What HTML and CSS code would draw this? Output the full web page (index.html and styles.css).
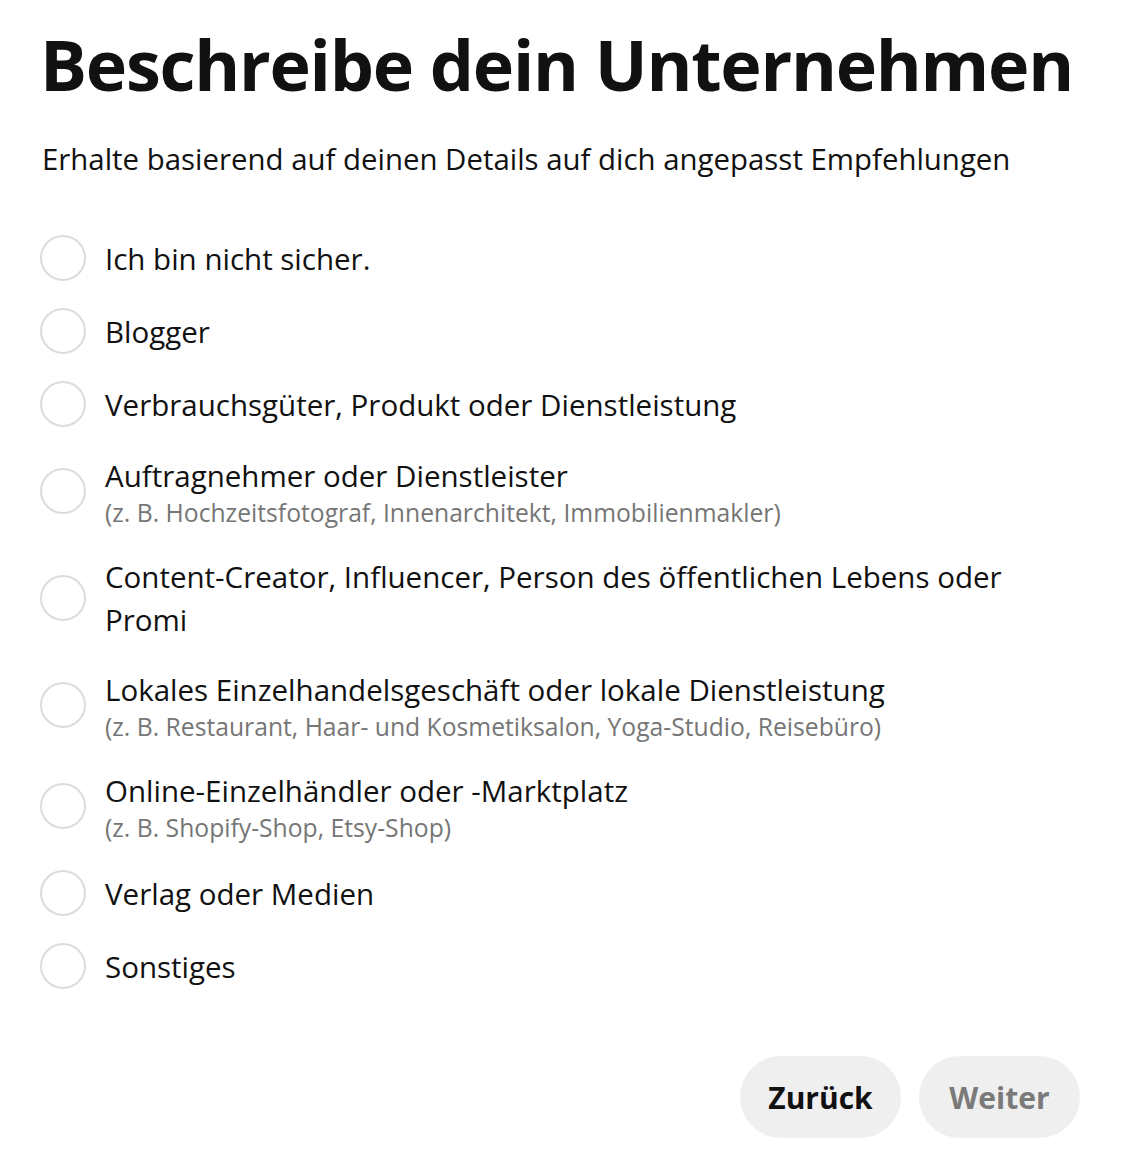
FILE: index.html
```html
<!DOCTYPE html>
<html lang="de">
<head>
<meta charset="utf-8">
<title>Beschreibe dein Unternehmen</title>
<link rel="stylesheet" href="styles.css">
</head>
<body>
<main class="dialog">
  <h1 class="title">Beschreibe dein Unternehmen</h1>
  <p class="subtitle">Erhalte basierend auf deinen Details auf dich angepasst Empfehlungen</p>
  <ul class="options">
    <li class="option"><span class="radio"></span><div class="label"><div class="main">Ich bin nicht sicher.</div></div></li>
    <li class="option"><span class="radio"></span><div class="label"><div class="main">Blogger</div></div></li>
    <li class="option"><span class="radio"></span><div class="label"><div class="main">Verbrauchsgüter, Produkt oder Dienstleistung</div></div></li>
    <li class="option"><span class="radio"></span><div class="label"><div class="main">Auftragnehmer oder Dienstleister</div><div class="sub">(z. B. Hochzeitsfotograf, Innenarchitekt, Immobilienmakler)</div></div></li>
    <li class="option"><span class="radio"></span><div class="label"><div class="main">Content-Creator, Influencer, Person des öffentlichen Lebens oder Promi</div></div></li>
    <li class="option"><span class="radio"></span><div class="label"><div class="main">Lokales Einzelhandelsgeschäft oder lokale Dienstleistung</div><div class="sub">(z. B. Restaurant, Haar- und Kosmetiksalon, Yoga-Studio, Reisebüro)</div></div></li>
    <li class="option"><span class="radio"></span><div class="label"><div class="main">Online-Einzelhändler oder -Marktplatz</div><div class="sub">(z. B. Shopify-Shop, Etsy-Shop)</div></div></li>
    <li class="option"><span class="radio"></span><div class="label"><div class="main">Verlag oder Medien</div></div></li>
    <li class="option"><span class="radio"></span><div class="label"><div class="main">Sonstiges</div></div></li>
  </ul>
  <div class="actions">
    <button class="btn btn-back" type="button">Zurück</button>
    <button class="btn btn-next" type="button" disabled>Weiter</button>
  </div>
</main>
</body>
</html>
```

FILE: styles.css
```css
* { box-sizing: border-box; }
html, body { margin: 0; padding: 0; background: #ffffff; }
body {
  font-family: "Open Sans", "Noto Sans", "Liberation Sans", sans-serif;
  color: #111111;
}
.dialog {
  width: 1132px;
  padding: 22px 52px 0 40px;
}
.title {
  margin: 0;
  font-size: 70px;
  font-weight: 700;
  line-height: 84px;
  letter-spacing: -1.25px;
  white-space: nowrap;
  color: #111111;
}
.subtitle {
  margin: 33px 0 0 2px;
  font-size: 29.4px;
  line-height: 40px;
  color: #111111;
}
.options {
  list-style: none;
  margin: 56px 0 0 0;
  padding: 0;
  display: flex;
  flex-direction: column;
  gap: 27px;
}
.option {
  display: flex;
  align-items: center;
  gap: 19px;
}
.radio {
  flex: none;
  width: 46px;
  height: 46px;
  border: 2px solid #dcdcdc;
  border-radius: 50%;
  background: #fff;
}
.label { flex: 1; min-width: 0; }
.main {
  font-size: 29.5px;
  line-height: 43px;
}
.sub {
  font-size: 24.7px;
  line-height: 31px;
  color: #767676;
}
.actions {
  display: flex;
  justify-content: flex-end;
  gap: 18px;
  margin-top: 67px;
}
.btn {
  height: 82px;
  width: 161px;
  border: none;
  border-radius: 41px;
  background: #efefef;
  font-family: inherit;
  font-size: 30px;
  font-weight: 700;
  color: #111111;
  padding: 0;
}
.btn-next { color: #7a7a7a; }
```
